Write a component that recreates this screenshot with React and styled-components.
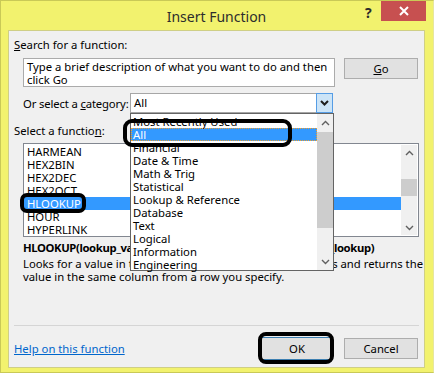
import React from "react";
import styled, { createGlobalStyle } from "styled-components";

const GlobalStyle = createGlobalStyle`
  html, body {
    margin: 0;
    padding: 0;
    background: #ffffff;
  }
  * {
    box-sizing: border-box;
  }
`;

const categories = [
  "Most Recently Used",
  "All",
  "Financial",
  "Date & Time",
  "Math & Trig",
  "Statistical",
  "Lookup & Reference",
  "Database",
  "Text",
  "Logical",
  "Information",
  "Engineering",
];

const functions = ["HARMEAN", "HEX2BIN", "HEX2DEC", "HEX2OCT", "HLOOKUP", "HOUR", "HYPERLINK"];

const Chevron = ({ up, bold }) => (
  <svg width="9" height="6" viewBox="0 0 9 6">
    <polyline
      points={up ? "1,5 4.5,1.5 8,5" : "1,1 4.5,4.5 8,1"}
      fill="none"
      stroke={bold ? "#1e1e1e" : "#606060"}
      strokeWidth={bold ? 2 : 1.4}
    />
  </svg>
);

const Dialog = () => {
  return (
    <Window>
      <TitleBar>
        <Title>Insert Function</Title>
        <HelpMark>?</HelpMark>
        <CloseButton>
          <svg width="10" height="10" viewBox="0 0 10 10">
            <path d="M1 1 L9 9 M9 1 L1 9" stroke="#fff" strokeWidth="2" />
          </svg>
        </CloseButton>
      </TitleBar>

      <Panel>
        <Label>
          <u>S</u>earch for a function:
        </Label>
        <SearchRow>
          <SearchBox>
            Type a brief description of what you want to do and then
            <br />
            click Go
          </SearchBox>
          <Button>
            <u>G</u>o
          </Button>
        </SearchRow>

        <CategoryRow>
          <span>
            Or select a <u>c</u>ategory:
          </span>
          <Select>
            <SelectValue>All</SelectValue>
            <SelectArrow>
              <Chevron bold />
            </SelectArrow>
          </Select>
        </CategoryRow>

        <SectionLabel>
          Select a functio<u>n</u>:
        </SectionLabel>
        <FunctionList>
          <Items>
            {functions.map((f) => (
              <Item key={f} selected={f === "HLOOKUP"}>
                {f}
              </Item>
            ))}
          </Items>
          <ScrollBar>
            <Chevron up />
            <Track>
              <Thumb top={19} height={17} />
            </Track>
            <Chevron />
          </ScrollBar>
        </FunctionList>

        <Signature>HLOOKUP(lookup_value,table_array,row_index_num,range_lookup)</Signature>
        <Description>
          Looks for a value in the top row of a table or array of values and returns the
          <br />
          value in the same column from a row you specify.
        </Description>

        <Footer>
          <HelpLink href="#">Help on this function</HelpLink>
          <FooterButtons>
            <Button primary>OK</Button>
            <Button>Cancel</Button>
          </FooterButtons>
        </Footer>

        <Dropdown>
          <DropItems>
            {categories.map((c) => (
              <DropItem key={c} selected={c === "All"}>
                {c}
              </DropItem>
            ))}
          </DropItems>
          <DropScroll>
            <Chevron up />
            <Track>
              <Thumb top={2} height={96} />
            </Track>
            <Chevron />
          </DropScroll>
        </Dropdown>

        <Ring left={114} top={88} width={169} height={28} radius={9} />
        <Ring left={11} top={162} width={66} height={20} radius={7} />
        <Ring left={249} top={301} width={76} height={32} radius={8} />
      </Panel>
    </Window>
  );
};

export default function App() {
  return (
    <>
      <GlobalStyle />
      <Dialog />
    </>
  );
}

const Window = styled.div`
  width: 434px;
  height: 373px;
  background: #f2f26e;
  border: 1px solid #c9c957;
  border-right-color: #e6e6a0;
  padding: 0 8px 0 7px;
  display: flex;
  flex-direction: column;
  font-family: "Noto Sans", "Open Sans", sans-serif;
  font-size: 11.3px;
  color: #000;
  white-space: nowrap;
`;

const TitleBar = styled.div`
  height: 29px;
  position: relative;
  display: flex;
  align-items: center;
  justify-content: center;
`;

const Title = styled.div`
  font-size: 14px;
  color: #2d2d2d;
  padding-top: 1px;
`;

const HelpMark = styled.div`
  position: absolute;
  left: 357px;
  top: 2px;
  font-weight: bold;
  font-size: 14px;
  color: #2a2a2a;
`;

const CloseButton = styled.div`
  position: absolute;
  left: 373px;
  top: 0;
  width: 45px;
  height: 20px;
  background: #c75050;
  display: flex;
  align-items: center;
  justify-content: center;
`;

const Panel = styled.div`
  position: relative;
  height: 338px;
  background: #f0f0f0;
  border: 1px solid #cfcf86;
  padding: 0 5px;
  display: flex;
  flex-direction: column;
  line-height: 13px;
`;

const Label = styled.div`
  margin-top: 7px;
  line-height: 14px;
`;

const SectionLabel = styled(Label)`
  margin-top: 11px;
`;

const SearchRow = styled.div`
  display: flex;
  align-items: flex-start;
  gap: 9px;
  margin: 6px 0 0 9px;
`;

const SearchBox = styled.div`
  width: 312px;
  height: 29px;
  background: #fff;
  border: 1px solid #ababab;
  padding: 1px 3px;
  line-height: 13px;
`;

const Button = styled.div`
  width: ${(p) => (p.primary ? "72px" : "74px")};
  height: ${(p) => (p.primary ? "23px" : "21px")};
  background: #e1e1e1;
  border: 1px solid ${(p) => (p.primary ? "#3c7fb1" : "#adadad")};
  display: flex;
  align-items: center;
  justify-content: center;
`;

const CategoryRow = styled.div`
  display: flex;
  align-items: center;
  margin: 6px 0 0 9px;
  height: 20px;
  span {
    width: 107px;
    letter-spacing: -0.15px;
  }
`;

const Select = styled.div`
  width: 203px;
  height: 20px;
  background: #fff;
  border: 1px solid #a6a6a6;
  display: flex;
`;

const SelectValue = styled.div`
  flex: 1;
  padding: 2px 3px;
`;

const SelectArrow = styled.div`
  width: 17px;
  margin: -1px -1px -1px 0;
  background: #cce4f7;
  border: 1px solid #569de5;
  display: flex;
  align-items: center;
  justify-content: center;
`;

const FunctionList = styled.div`
  margin: 5px 0 0 9px;
  height: 94px;
  background: #fff;
  border: 1px solid #828790;
  display: flex;
`;

const Items = styled.div`
  flex: 1;
  padding-top: 1px;
`;

const Item = styled.div`
  height: 13px;
  line-height: 13px;
  padding-left: 3px;
  background: ${(p) => (p.selected ? "#3399ff" : "transparent")};
  color: ${(p) => (p.selected ? "#fff" : "#000")};
`;

const ScrollBar = styled.div`
  width: 16px;
  margin: 1px 1px 1px 0;
  background: #f0f0f0;
  display: flex;
  flex-direction: column;
  align-items: center;
  padding: 5px 0 4px;
  gap: 4px;
`;

const Track = styled.div`
  position: relative;
  flex: 1;
  width: 100%;
`;

const Thumb = styled.div`
  position: absolute;
  left: 0;
  right: 0;
  top: ${(p) => p.top}px;
  height: ${(p) => p.height}px;
  background: #cdcdcd;
`;

const Signature = styled.div`
  margin: 4px 0 0 9px;
  font-weight: bold;
  letter-spacing: -0.38px;
`;

const Description = styled.div`
  margin: 3px 0 0 9px;
`;

const Footer = styled.div`
  margin-top: auto;
  border-top: 1px solid #d5d5d5;
  padding: 11px 0 7px;
  display: flex;
  align-items: center;
  justify-content: space-between;
`;

const HelpLink = styled.a`
  color: #0066cc;
  text-decoration: underline;
`;

const FooterButtons = styled.div`
  display: flex;
  align-items: center;
  gap: 11px;
  margin-right: 1px;
`;

const Dropdown = styled.div`
  position: absolute;
  left: 121px;
  top: 82px;
  width: 204px;
  height: 158px;
  background: #fff;
  border: 1px solid #646464;
  display: flex;
`;

const DropItems = styled.div`
  flex: 1;
  padding-top: 1px;
`;

const DropItem = styled.div`
  height: 13px;
  line-height: 13px;
  padding-left: 2px;
  background: ${(p) => (p.selected ? "#3399ff" : "transparent")};
  color: ${(p) => (p.selected ? "#fff" : "#000")};
  outline: ${(p) => (p.selected ? "1px dotted #f0a030" : "none")};
  outline-offset: -1px;
`;

const DropScroll = styled(ScrollBar)`
  width: 16px;
  margin: 0;
  padding: 6px 0 5px;
`;

const Ring = styled.div`
  position: absolute;
  left: ${(p) => p.left}px;
  top: ${(p) => p.top}px;
  width: ${(p) => p.width}px;
  height: ${(p) => p.height}px;
  border: 4px solid #000;
  border-radius: ${(p) => p.radius}px;
  pointer-events: none;
`;
